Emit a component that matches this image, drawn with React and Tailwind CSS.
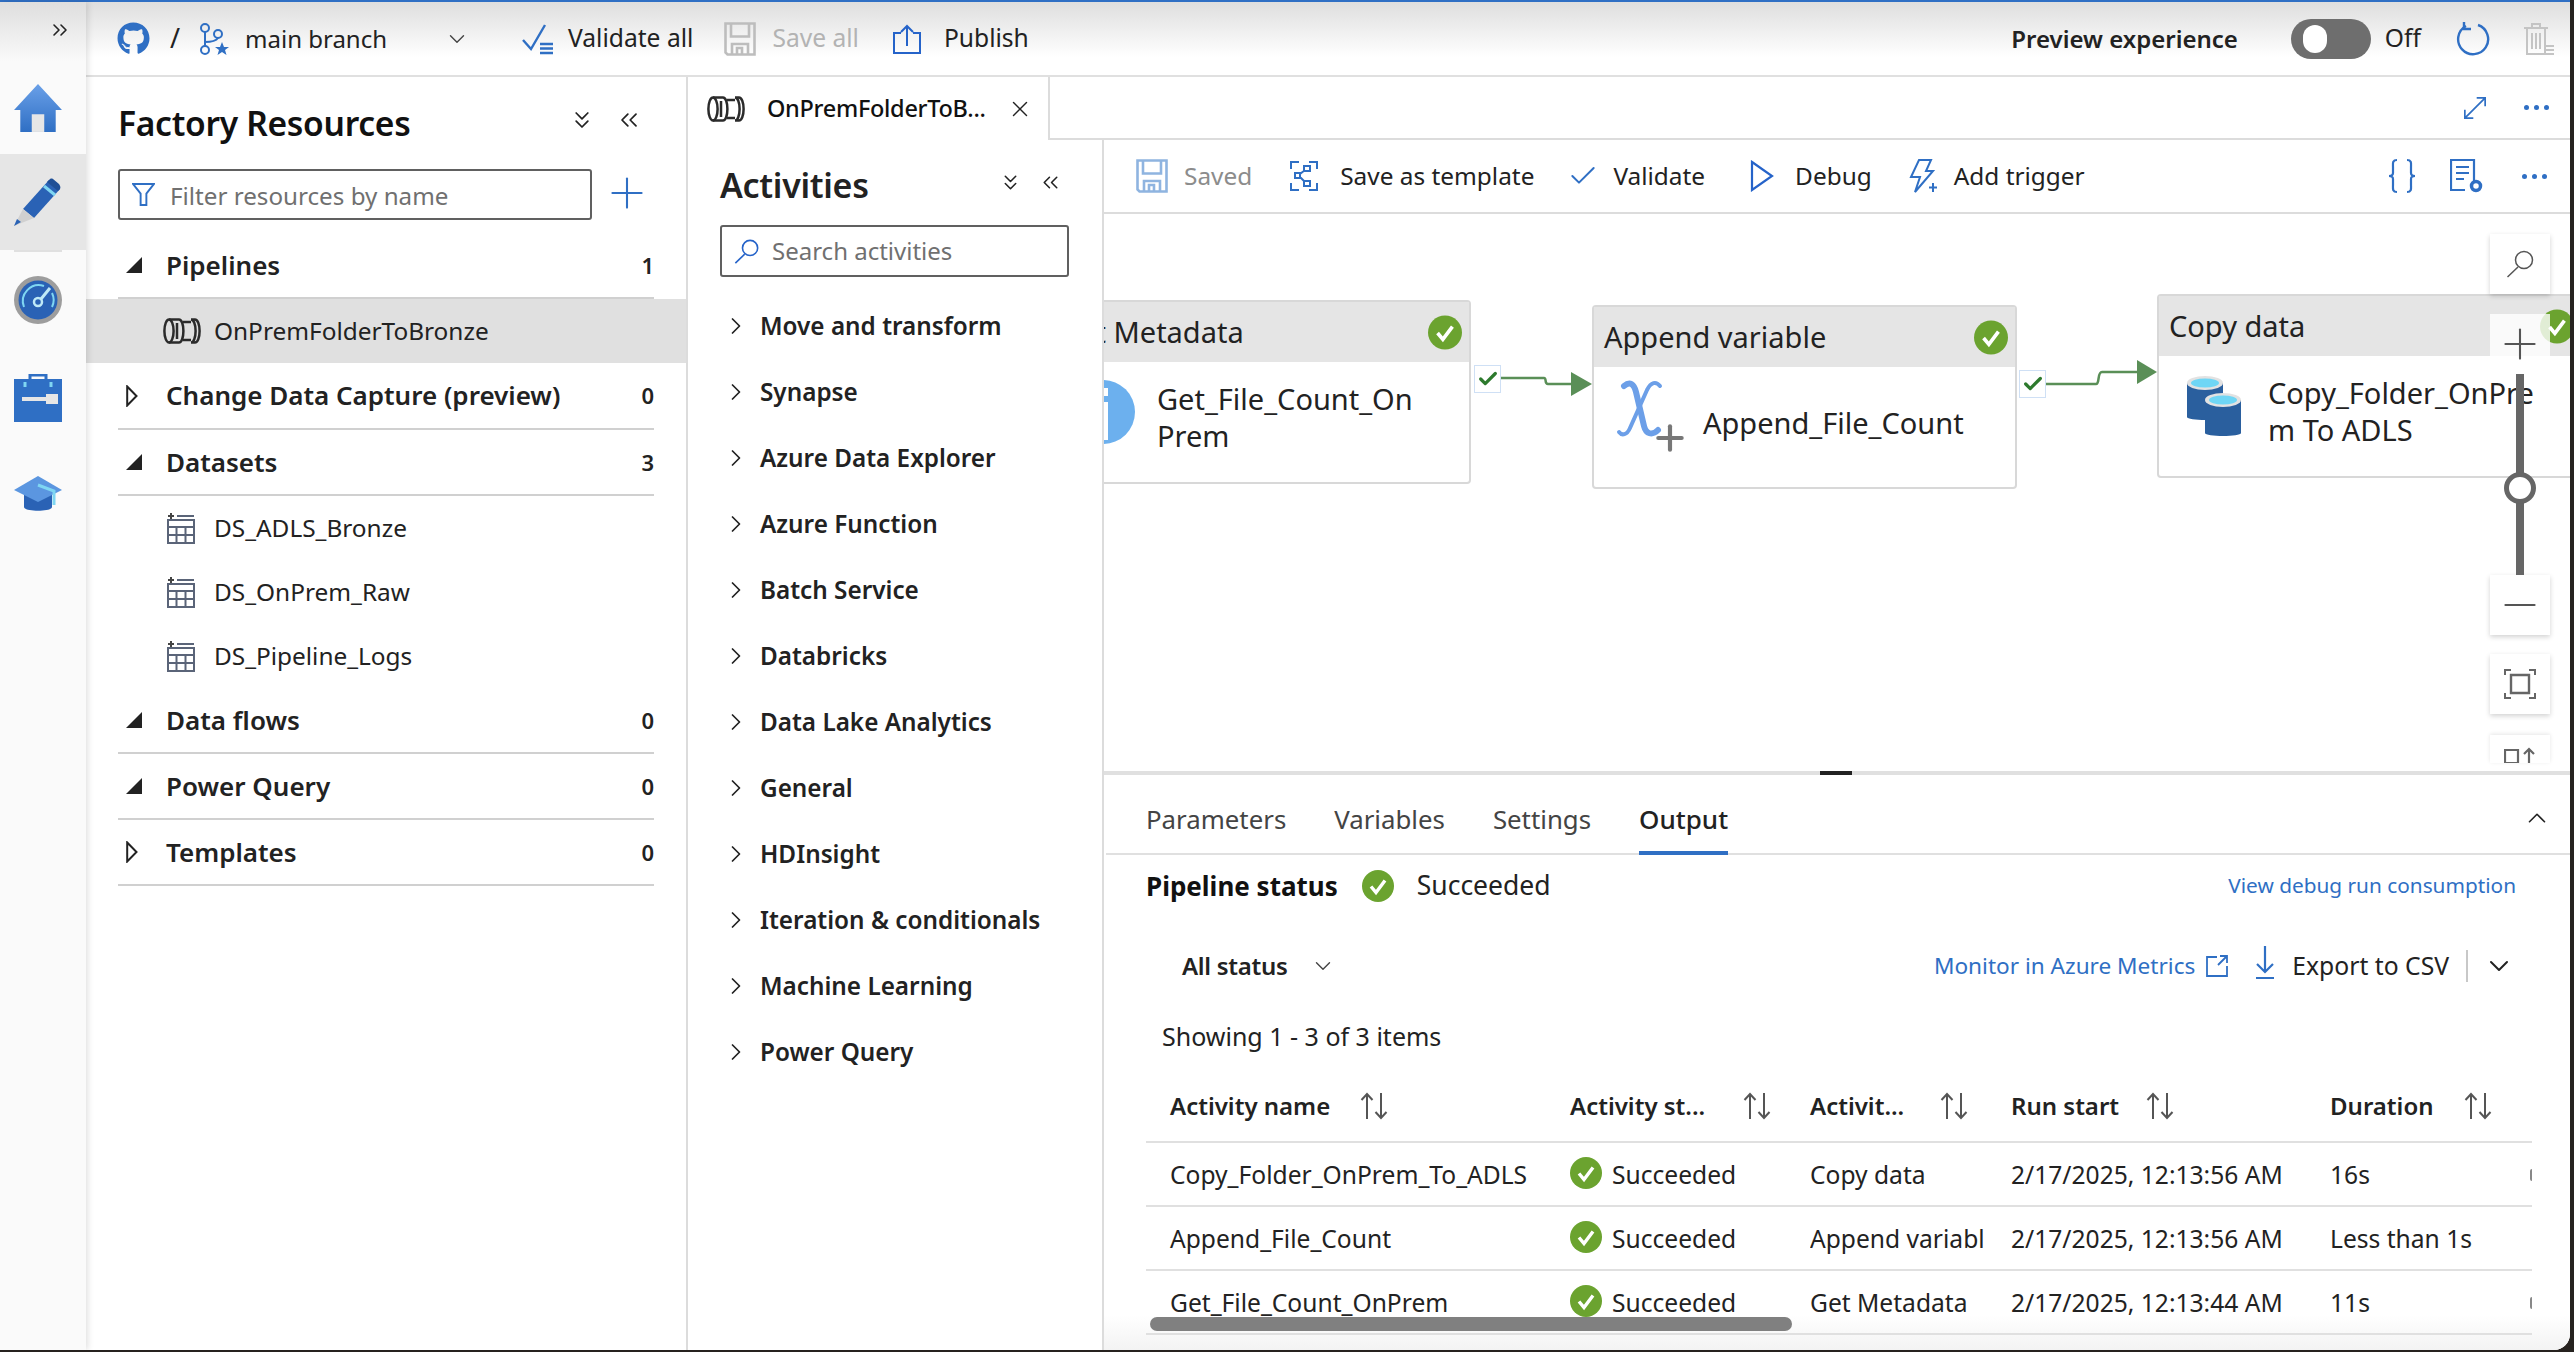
import React from "react";
import { FaGithub } from "react-icons/fa";
import {
  ChevronDown,
  ChevronRight,
  ChevronUp,
  ChevronsDown,
  ChevronsLeft,
  ChevronsRight,
  Plus,
  X,
  Check,
  Minus,
} from "lucide-react";

const BLUE = "#2f6fc4";

const StatusCheck = ({ className }) => (
  <svg viewBox="0 0 32 32" className={className}>
    <circle cx="16" cy="16" r="16" fill="#6ba32f" />
    <path d="M9 16.5l5 6 9-12" fill="none" stroke="#fff" strokeWidth="3.4" />
  </svg>
);

const Lens = ({ color, width, className }) => (
  <svg viewBox="0 0 28 28" fill="none" stroke={color} strokeWidth={width} className={className}>
    <circle cx="18" cy="10" r="8.500" />
    <path d="M12 17L1.500 27" />
  </svg>
);

const PipelineIcon = ({ className }) => (
  <svg viewBox="0 0 38 26" fill="none" stroke="#2b2b2b" strokeWidth="2.500" className={className}>
    <ellipse cx="6" cy="13" rx="4.6" ry="11.5" />
    <path d="M6 1.5h10M6 24.5h10M16 1.5c2.6 0 4.4 5 4.4 11.5s-1.800 11.500-4.400 11.500" />
    <path d="M20 4h8M20 22h8M14 5v16" />
    <path d="M28 1.500h4c2.600 0 4.600 5 4.600 11.500s-2 11.500-4.600 11.500h-4c2.600 0 4.600-5 4.600-11.500S30.600 1.500 28 1.500z" />
  </svg>
);

const DatasetIcon = () => (
  <svg viewBox="0 0 28 32" className="w-[28px] h-[32px] shrink-0" fill="none" stroke="#5a6478" strokeWidth="2">
    <path d="M1 8h26v23H1zM1 15h26M1 23h26M9.500 15v16M18.500 15v16" />
    <path d="M10 4h17" />
    <path d="M4 1v6M1 4h6" stroke="#444" />
  </svg>
);

const SolidTri = () => (
  <svg viewBox="0 0 16 16" className="w-[16px] h-[16px]">
    <path d="M16 0v16H0z" fill="#222" />
  </svg>
);

const OpenTri = () => (
  <svg viewBox="0 0 12 22" className="w-[12px] h-[22px]">
    <path d="M1.200 1.500L10.500 11 1.200 20.500z" fill="none" stroke="#222" strokeWidth="2" />
  </svg>
);

const SortArrows = () => (
  <svg viewBox="0 0 28 28" className="w-[28px] h-[28px] shrink-0" fill="none" stroke="#555" strokeWidth="2">
    <path d="M7 27V2M1.500 8L7 2l5.500 6M21 1v25M15.500 20l5.500 6 5.500-6" />
  </svg>
);

const SaveIcon = ({ color, className }) => (
  <svg viewBox="0 0 32 34" fill="none" stroke={color} strokeWidth="2.600" className={className}>
    <path d="M1.500 1.500h29v31h-27l-2-2z" />
    <path d="M7 1.500v13h18v-13M8 32.500V22h16v10.500M13 32v-6h5v6" />
  </svg>
);

const Dots = ({ className }) => (
  <div className={`flex gap-[5px] ${className}`}>
    <span className="w-[5px] h-[5px] rounded-full bg-[#2f6fc4]" />
    <span className="w-[5px] h-[5px] rounded-full bg-[#2f6fc4]" />
    <span className="w-[5px] h-[5px] rounded-full bg-[#2f6fc4]" />
  </div>
);

const Rail = () => (
  <div className="w-[86px] shrink-0 flex flex-col items-center bg-[linear-gradient(180deg,#dedede_0,#fafafa_60px)] shadow-[2px_0_6px_rgba(0,0,0,0.12)] z-10">
    <div className="h-[75px] w-full flex justify-end pr-[14px] pt-[16px]">
      <ChevronsRight size={24} strokeWidth={1.6} color="#222" />
    </div>
    <div className="h-[77px] flex items-center pb-[16px] -ml-[10px]">
      <svg viewBox="0 0 48 48" className="w-[50px] h-[50px]">
        <defs>
          <linearGradient id="homeFill" x1="0" y1="0" x2="0" y2="1">
            <stop offset="0" stopColor="#6aa0e8" />
            <stop offset="1" stopColor="#2f6fc4" />
          </linearGradient>
        </defs>
        <path d="M24 1L1 26h6v21h34V26h6z" fill="url(#homeFill)" />
        <path d="M18 30h12v17H18z" fill="#e6e6e6" />
      </svg>
    </div>
    <div className="h-[96px] w-full bg-[#e6e6e6] flex items-center justify-center pr-[10px]">
      <svg viewBox="0 0 50 50" className="w-[50px] h-[50px]">
        <path d="M10 32L36 3l11 9-26 29z" fill="#2a62b5" />
        <path d="M34 5l11 9 2-2c1-2 0-3-1-5l-6-5c-2-1-3 0-4 1z" fill="#1f4f96" />
        <path d="M31 9l11 9" stroke="#7fd6f2" strokeWidth="3" />
        <path d="M10 32l11 9-20 8z" fill="#d0d0d0" />
        <path d="M4 42l4 3-7 4z" fill="#2a62b5" />
      </svg>
    </div>
    <div className="h-[2px] w-[48px] bg-[#e0e0e0] -ml-[10px]" />
    <div className="h-[95px] flex items-center -ml-[10px]">
      <svg viewBox="0 0 48 48" className="w-[48px] h-[48px]">
        <circle cx="24" cy="24" r="24" fill="#9d9d9d" />
        <circle cx="24" cy="24" r="19.500" fill="#2a62b5" />
        <path d="M10 31a16 16 0 0 1 20-21M38 17a16 16 0 0 1 0 14" stroke="#7fd6f2" strokeWidth="2" fill="none" />
        <circle cx="24" cy="26" r="4" fill="none" stroke="#bfe9f7" strokeWidth="2.500" />
        <path d="M27 23l9-11" stroke="#bfe9f7" strokeWidth="3" />
      </svg>
    </div>
    <div className="h-[102px] flex items-center -ml-[10px]">
      <svg viewBox="0 0 48 48" className="w-[48px] h-[48px]">
        <path d="M16 5V1h16v4" fill="none" stroke="#2f6fc4" strokeWidth="3" />
        <path d="M0 5h48v43H0z" fill="#2f6fc4" />
        <path d="M11 13v-5M37 13V8" stroke="#7fd6f2" strokeWidth="3" />
        <path d="M8 25h26M34 22h8v2h-4v2h4v2h-8z" stroke="#e6e6e6" strokeWidth="4" fill="#e6e6e6" />
      </svg>
    </div>
    <div className="h-[92px] flex items-center -ml-[10px]">
      <svg viewBox="0 0 48 40" className="w-[48px] h-[40px]">
        <path d="M10 18v14c0 5 28 5 28 0V18z" fill="#2a62b5" />
        <path d="M24 1L0 15l24 12 24-12z" fill="#5b96e0" />
        <path d="M24 10l16 6v14" fill="none" stroke="#7fd6f2" strokeWidth="3" />
      </svg>
    </div>
  </div>
);

const TopBar = () => (
  <div className="h-[75px] shrink-0 flex items-center bg-[linear-gradient(180deg,#dedede_0,#ffffff_55px)] border-b-2 border-[#e0e0e0] text-[24.600px] text-[#222]">
    <FaGithub size={33} color={BLUE} className="ml-[31px]" />
    <span className="ml-[20px] text-[27px]">/</span>
    <svg viewBox="0 0 30 32" className="ml-[19px] w-[30px] h-[32px]" fill="none" stroke={BLUE} strokeWidth="2">
      <circle cx="6" cy="5" r="4" />
      <circle cx="19" cy="11" r="4" />
      <circle cx="6" cy="27" r="4" />
      <path d="M6 9v14M6 19c6 0 11-1 13-4" />
      <path d="M23 19l2 5h5l-4 3 1.500 5-4.500-3-4.500 3 1.500-5-4-3h5z" fill={BLUE} stroke="none" />
    </svg>
    <span className="ml-[16px] text-[24px]">main branch</span>
    <ChevronDown size={26} strokeWidth={1.300} color="#444" className="ml-[57px]" />
    <svg viewBox="0 0 32 32" className="ml-[52px] w-[32px] h-[32px]" fill="none" stroke={BLUE} strokeWidth="2.400">
      <path d="M1 17l8 9L23 2" />
      <path d="M18 21h13M18 25.500h13M18 30h13" />
    </svg>
    <span className="ml-[14px]">Validate all</span>
    <SaveIcon color="#bdbdbd" className="ml-[31px] w-[32px] h-[34px]" />
    <span className="ml-[16px] text-[#b3b3b3]">Save all</span>
    <svg viewBox="0 0 28 30" className="ml-[34px] w-[28px] h-[30px]" fill="none" stroke="#2563c9" strokeWidth="2">
      <path d="M8 9H1v20h26V9h-7M14 22V2M8 8l6-6 6 6" />
    </svg>
    <span className="ml-[23px]">Publish</span>
    <span className="ml-auto font-semibold text-[24px]">Preview experience</span>
    <div className="ml-[53px] w-[80px] h-[40px] rounded-full bg-[#6e6e6e] flex items-center pl-[12px]">
      <span className="w-[24px] h-[28px] rounded-full bg-white" />
    </div>
    <span className="ml-[14px]">Off</span>
    <svg viewBox="0 0 34 34" className="ml-[35px] w-[34px] h-[34px]" fill="none" stroke={BLUE} strokeWidth="2.400">
      <path d="M10 4a15 15 0 1 0 12-1" />
      <path d="M8 0v7h7" />
    </svg>
    <svg viewBox="0 0 32 34" className="ml-[33px] mr-[15px] w-[32px] h-[34px]" fill="none" stroke="#c4c4c4" strokeWidth="2">
      <path d="M1 6h24M9 6V2h8v4M4 6v26h18V6M9 11v16M13 11v16M17 11v16" />
      <path d="M22 24h9M22 28h9M22 32h9" />
    </svg>
  </div>
);

const SectionRow = ({ label, count, open, extra }) => (
  <div className={`mx-[32px] flex items-center border-b-2 border-[#d0d0d0] ${extra || "h-[66px]"}`}>
    <div className="w-[48px] pl-[8px] flex items-center">{open ? <SolidTri /> : <OpenTri />}</div>
    <span className="font-semibold text-[26px] text-[#222] flex-1">{label}</span>
    <span className="font-semibold text-[22px] text-[#222]">{count}</span>
  </div>
);

const DatasetRow = ({ name }) => (
  <div className="h-[64px] pl-[75px] flex items-center gap-[19px] text-[24.400px] text-[#222]">
    <span className="ml-[6px] flex"><DatasetIcon /></span>
    <span>{name}</span>
  </div>
);

const ResourcesPanel = () => (
  <div className="w-[602px] shrink-0 border-r-2 border-[#dcdcdc] flex flex-col bg-white">
    <div className="h-[92px] pl-[32px] flex items-center">
      <span className="font-semibold text-[33.600px] text-[#111] tracking-[-0.3px]">Factory Resources</span>
      <ChevronsDown size={28} strokeWidth={1.500} color="#222" className="ml-auto -mt-[6px]" />
      <ChevronsLeft size={28} strokeWidth={1.500} color="#222" className="ml-[19px] mr-[43px] -mt-[6px]" />
    </div>
    <div className="ml-[32px] flex items-center">
      <div className="w-[474px] h-[51px] border-2 border-[#606060] rounded-[3px] flex items-center pl-[12px]">
        <svg viewBox="0 0 24 26" className="w-[23px] h-[25px]" fill="none" stroke={BLUE} strokeWidth="2">
          <path d="M1 2h22l-8 10v12h-6V12z" />
        </svg>
        <span className="ml-[15px] pt-[3px] text-[24.200px] text-[#707070]">Filter resources by name</span>
      </div>
      <Plus size={50} strokeWidth={1} color={BLUE} className="ml-[10px] -mt-[4px]" />
    </div>
    <div className="h-[13px]" />
    <SectionRow label="Pipelines" count="1" open />
    <div className="h-[64px] bg-[#e0e0e0] pl-[77px] flex items-center gap-[13px] text-[24.400px] text-[#222]">
      <PipelineIcon className="w-[38px] h-[26px]" />
      <span>OnPremFolderToBronze</span>
    </div>
    <SectionRow label="Change Data Capture (preview)" count="0" extra="h-[67px]" />
    <SectionRow label="Datasets" count="3" open />
    <DatasetRow name="DS_ADLS_Bronze" />
    <DatasetRow name="DS_OnPrem_Raw" />
    <DatasetRow name="DS_Pipeline_Logs" />
    <SectionRow label="Data flows" count="0" open />
    <SectionRow label="Power Query" count="0" open />
    <SectionRow label="Templates" count="0" />
  </div>
);

const categories = [
  "Move and transform",
  "Synapse",
  "Azure Data Explorer",
  "Azure Function",
  "Batch Service",
  "Databricks",
  "Data Lake Analytics",
  "General",
  "HDInsight",
  "Iteration & conditionals",
  "Machine Learning",
  "Power Query",
];

const ActivitiesPanel = () => (
  <div className="w-[416px] shrink-0 border-r-2 border-[#dcdcdc] flex flex-col pl-[32px] bg-white z-10">
    <div className="h-[85px] pt-[24px] flex items-start">
      <span className="font-semibold text-[34px] leading-[42px] text-[#222] tracking-[-0.3px]">Activities</span>
      <ChevronsDown size={25} strokeWidth={1.500} color="#222" className="ml-auto mt-[6px]" />
      <ChevronsLeft size={25} strokeWidth={1.500} color="#222" className="ml-[15px] mr-[39px] mt-[6px]" />
    </div>
    <div className="w-[349px] h-[52px] border-2 border-[#606060] rounded-[3px] flex items-center pl-[12px]">
      <Lens color="#2563c9" width="1.800" className="w-[25px] h-[25px]" />
      <span className="ml-[13px] text-[24px] text-[#707070]">Search activities</span>
    </div>
    <div className="h-[16px]" />
    {categories.map((c) => (
      <div key={c} className="h-[66px] flex items-center">
        <ChevronRight size={28} strokeWidth={1.500} color="#222" className="ml-[2px]" />
        <span className="ml-[10px] font-semibold text-[24.300px] text-[#222]">{c}</span>
      </div>
    ))}
  </div>
);

const EditorToolbar = () => (
  <div className="h-[74px] shrink-0 border-b-2 border-[#dcdcdc] flex items-center text-[24.400px] text-[#222]">
    <SaveIcon color="#8fb4e0" className="ml-[32px] w-[32px] h-[34px]" />
    <span className="ml-[16px] text-[#8c8c8c]">Saved</span>
    <svg viewBox="0 0 28 30" className="ml-[38px] w-[28px] h-[30px]" fill="none" stroke={BLUE} strokeWidth="2">
      <path d="M1 8V1h8M19 1h8v7M1 22v7h8M19 29h8v-7" />
      <path d="M14 5h6v5h-6zM14 20h6v5h-6zM5 12h5v5H5zM10 13l5-4M10 16l5 5" />
    </svg>
    <span className="ml-[22px]">Save as template</span>
    <Check size={32} strokeWidth={1.500} color={BLUE} className="ml-[33px]" />
    <span className="ml-[14px]">Validate</span>
    <svg viewBox="0 0 24 32" className="ml-[45px] w-[24px] h-[32px]" fill="none" stroke="#2563c9" strokeWidth="2.200">
      <path d="M2 2l20 14L2 30z" />
    </svg>
    <span className="ml-[21px]">Debug</span>
    <svg viewBox="0 0 30 34" className="ml-[37px] w-[30px] h-[34px]" fill="none" stroke={BLUE} strokeWidth="2">
      <path d="M10 1h12l-5 11h7L6 33l5-15H2z" />
      <path d="M24 24v9M20 28.500h8" />
    </svg>
    <span className="ml-[15px]">Add trigger</span>
    <svg viewBox="0 0 30 36" className="ml-auto w-[30px] h-[36px]" fill="none" stroke={BLUE} strokeWidth="2.200">
      <path d="M10 2C5 2 6 6 6 9v6c0 2-2 3-4 3 2 0 4 1 4 3v6c0 3-1 7 4 7M20 2c5 0 4 4 4 7v6c0 2 2 3 4 3-2 0-4 1-4 3v6c0 3 1 7-4 7" />
    </svg>
    <svg viewBox="0 0 34 34" className="ml-[33px] w-[34px] h-[34px]" fill="none" stroke={BLUE} strokeWidth="2.200">
      <path d="M24 22V1H1v30h14M6 8h13M6 14h13M6 20h8" />
      <circle cx="26" cy="27" r="4.500" strokeWidth="3.500" />
    </svg>
    <Dots className="ml-[38px] mr-[23px]" />
  </div>
);

const Node = ({ title, position, children, check }) => (
  <div className={`absolute w-[425px] h-[184px] rounded-[4px] border-2 border-[#d8d8d8] bg-white ${position}`}>
    <div className="h-[60px] bg-[#e5e5e5] flex items-center pl-[10px] text-[29px] text-[#222] whitespace-nowrap">{title}</div>
    {check}
    {children}
  </div>
);

const NodeBody = ({ icon, lines }) => (
  <div className="h-[120px] flex items-start">
    <div className="w-[109px] h-[100px] flex items-center justify-center shrink-0">{icon}</div>
    <div className="pt-[10px] text-[29px] leading-[37px] text-[#222] min-h-[100px] flex flex-col justify-center">
      {lines.map((l) => (
        <span key={l} className="whitespace-pre">{l}</span>
      ))}
    </div>
  </div>
);

const ZoomBtn = ({ className, children }) => (
  <div className={`w-[60px] h-[60px] flex items-center justify-center shadow-[0_2px_5px_rgba(0,0,0,0.18)] ${className}`}>
    {children}
  </div>
);

const Canvas = () => (
  <div className="relative h-[557px] shrink-0 overflow-hidden bg-white">
    <Node
      title="Get Metadata"
      position="left-[-58px] top-[86px]"
      check={<StatusCheck className="absolute left-[380px] top-[13px] w-[34px] h-[35px]" />}
    >
      <NodeBody
        lines={["Get_File_Count_On", "Prem"]}
        icon={
          <svg viewBox="0 0 64 64" className="w-[64px] h-[64px]">
            <circle cx="32" cy="32" r="32" fill="#6cb0ee" />
            <path d="M28 22h9v38h-9zM28 8h9v8h-9z" fill="#fff" />
          </svg>
        }
      />
    </Node>
    <Node
      title="Append variable"
      position="left-[488px] top-[91px]"
      check={<StatusCheck className="absolute left-[380px] top-[13px] w-[34px] h-[35px]" />}
    >
      <NodeBody
        lines={["Append_File_Count"]}
        icon={
          <div className="relative w-[70px] h-[70px]">
            <svg viewBox="0 0 48 64" className="absolute left-[2px] top-[-4px] w-[48px] h-[64px]" fill="none" stroke="#6c9fe8" strokeLinecap="round">
              <path d="M8 8C14 3 18 6 20 14l8 34c2 8 8 10 14 4" strokeWidth="6" />
              <path d="M44 8c-4-5-9-4-13 4L14 50c-3 7-8 8-11 4" strokeWidth="4" />
            </svg>
            <Plus size={40} strokeWidth={2.500} color="#777" className="absolute left-[36px] top-[36px]" />
          </div>
        }
      />
    </Node>
    <Node
      title="Copy data"
      position="left-[1053px] top-[80px]"
      check={<StatusCheck className="absolute left-[381px] top-[13px] w-[34px] h-[35px]" />}
    >
      <NodeBody
        lines={["Copy_Folder_OnPre", "m To ADLS"]}
        icon={
          <svg viewBox="0 0 54 60" className="w-[54px] h-[60px]">
            <path d="M0 7v34c0 4 36 4 36 0V7z" fill="#2a5f9e" />
            <ellipse cx="18" cy="7" rx="18" ry="7" fill="#e2e2e2" />
            <ellipse cx="18" cy="7" rx="14" ry="4.500" fill="#6fd6f5" />
            <path d="M18 24v33c0 4 36 4 36 0V24z" fill="#2a5f9e" />
            <ellipse cx="36" cy="24" rx="18" ry="7" fill="#e2e2e2" />
            <ellipse cx="36" cy="24" rx="14" ry="4.500" fill="#6fd6f5" />
          </svg>
        }
      />
    </Node>

    <svg viewBox="0 0 1466 557" className="absolute left-0 top-[1px] w-[1466px] h-[557px] pointer-events-none" fill="none">
      <path d="M397 163h43c3 0 0 6 4 6h26" stroke="#5a8f57" strokeWidth="2.500" />
      <path d="M467 157l21 12-21 12z" fill="#5a8f57" />
      <path d="M942 169h50c4 0 1-12 6-12h36" stroke="#5a8f57" strokeWidth="2.500" />
      <path d="M1033 145l20 12-20 12z" fill="#5a8f57" />
    </svg>
    <div className="absolute left-[370px] top-[151px] w-[27px] h-[28px] bg-white border border-[#cfe0f5] flex items-center justify-center">
      <Check size={22} strokeWidth={3.500} color="#2d7a2d" />
    </div>
    <div className="absolute left-[915px] top-[156px] w-[27px] h-[28px] bg-white border border-[#cfe0f5] flex items-center justify-center">
      <Check size={22} strokeWidth={3.500} color="#2d7a2d" />
    </div>

    <div className="absolute left-[1386px] top-[20px] w-[60px] flex flex-col items-center">
      <ZoomBtn className="bg-white">
        <Lens color="#555" width="1.500" className="w-[28px] h-[28px]" />
      </ZoomBtn>
      <ZoomBtn className="bg-white/80 mt-[20px] shadow-none">
        <Plus size={50} strokeWidth={1} color="#555" />
      </ZoomBtn>
      <div className="relative w-[8px] h-[201px] bg-[#666]">
        <span className="absolute left-[-12px] top-[98px] w-[32px] h-[32px] rounded-full border-[5px] border-[#666] bg-white" />
      </div>
      <ZoomBtn className="bg-white">
        <Minus size={50} strokeWidth={1} color="#555" />
      </ZoomBtn>
      <ZoomBtn className="bg-white mt-[19px]">
        <svg viewBox="0 0 32 30" className="w-[32px] h-[30px]" fill="none" stroke="#666" strokeWidth="2">
          <path d="M1 6V1h6M25 1h6v5M1 24v5h6M25 29h6v-5" />
          <path d="M7 6h18v18H7z" strokeWidth="2.400" />
        </svg>
      </ZoomBtn>
      <div className="w-[60px] h-[28px] mt-[21px] bg-white shadow-[0_-1px_4px_rgba(0,0,0,0.1)] flex justify-center pt-[12px] overflow-hidden">
        <svg viewBox="0 0 32 16" className="w-[32px] h-[16px]" fill="none" stroke="#666" strokeWidth="2.200">
          <path d="M1 3h13v13H1zM25 16V3M20 7l5-5 5 5" />
        </svg>
      </div>
    </div>
  </div>
);

const rows = [
  ["Copy_Folder_OnPrem_To_ADLS", "Copy data", "2/17/2025, 12:13:56 AM", "16s"],
  ["Append_File_Count", "Append variable", "2/17/2025, 12:13:56 AM", "Less than 1s"],
  ["Get_File_Count_OnPrem", "Get Metadata", "2/17/2025, 12:13:44 AM", "11s"],
];

const HeadCell = ({ width, label, gap }) => (
  <div className={`flex items-center shrink-0 ${width}`}>
    <span className="font-semibold text-[24px] text-[#222]">{label}</span>
    <span className={`flex ${gap}`}><SortArrows /></span>
  </div>
);

const OutputPanel = () => (
  <div className="flex-1 relative flex flex-col bg-[linear-gradient(180deg,#ffffff_0,#ffffff_94%,#f3f3f3_100%)] text-[#222]">
    <div className="h-[80px] shrink-0 border-b-2 border-[#e0e0e0] ml-[2px] pl-[40px] flex items-end text-[25.800px] text-[#444]">
      <span className="h-[53px] mr-[48px]">Parameters</span>
      <span className="h-[53px] mr-[48px]">Variables</span>
      <span className="h-[53px] mr-[48px]">Settings</span>
      <span className="h-[55px] -mb-[2px] border-b-4 border-[#2f6fc4] font-medium text-[26px] text-[#222]">Output</span>
      <ChevronUp size={30} strokeWidth={1.300} color="#222" className="ml-auto mr-[18px] mb-[20px]" />
    </div>
    <div className="h-[62px] shrink-0 pl-[42px] pr-[54px] flex items-center">
      <span className="font-bold text-[26px] text-[#111]">Pipeline status</span>
      <StatusCheck className="ml-[24px] w-[32px] h-[32px]" />
      <span className="ml-[23px] text-[26.500px]">Succeeded</span>
      <span className="ml-auto text-[20.800px] text-[#2f6fc4]">View debug run consumption</span>
    </div>
    <div className="h-[98px] shrink-0 pl-[78px] pr-[55px] flex items-center">
      <span className="font-semibold text-[24px] tracking-[-0.3px]">All status</span>
      <ChevronDown size={26} strokeWidth={1.300} color="#444" className="ml-[23px]" />
      <span className="ml-auto text-[22.600px] text-[#2f6fc4]">Monitor in Azure Metrics</span>
      <svg viewBox="0 0 22 22" className="ml-[11px] w-[22px] h-[22px]" fill="none" stroke={BLUE} strokeWidth="1.800">
        <path d="M11 2H1v19h20V11M14 1h7v7M21 1l-9 9" />
      </svg>
      <svg viewBox="0 0 20 34" className="ml-[27px] w-[20px] h-[34px] -mt-[6px]" fill="none" stroke={BLUE} strokeWidth="2">
        <path d="M10 0v26M2 18l8 8 8-8M1 32h18" strokeWidth="2.200" />
      </svg>
      <span className="ml-[17px] text-[24.700px]">Export to CSV</span>
      <span className="ml-[17px] w-[2px] h-[32px] bg-[#c8c8c8]" />
      <ChevronDown size={32} strokeWidth={1.500} color="#222" className="ml-[15px]" />
    </div>
    <div className="h-[44px] shrink-0 pl-[58px] flex items-center text-[25px]">Showing 1 - 3 of 3 items</div>
    <div className="mt-[12px] ml-[42px] w-[1386px] overflow-hidden">
      <div className="h-[72px] pl-[24px] border-b-2 border-[#e0e0e0] flex items-center">
        <HeadCell width="w-[400px]" label="Activity name" gap="ml-[30px]" />
        <HeadCell width="w-[240px]" label="Activity st..." gap="ml-[38px]" />
        <HeadCell width="w-[201px]" label="Activit..." gap="ml-[36px]" />
        <HeadCell width="w-[319px]" label="Run start" gap="ml-[27px]" />
        <HeadCell width="w-[202px]" label="Duration" gap="ml-[30px]" />
      </div>
      {rows.map((r) => (
        <div key={r[0]} className="h-[64px] pl-[24px] pt-[2px] border-b-2 border-[#e0e0e0] flex items-center text-[24.600px] text-[#222]">
          <span className="w-[400px] shrink-0 whitespace-nowrap">{r[0]}</span>
          <span className="w-[240px] shrink-0 flex items-center gap-[10px]">
            <StatusCheck className="w-[32px] h-[32px] -mt-[4px]" />
            Succeeded
          </span>
          <span className="w-[201px] shrink-0">
            <span className="block w-[175px] overflow-hidden whitespace-nowrap">{r[1]}</span>
          </span>
          <span className="w-[319px] shrink-0 whitespace-nowrap">{r[2]}</span>
          <span className="w-[200px] shrink-0 whitespace-nowrap">{r[3]}</span>
          {r[3] !== "Less than 1s" && <span className="w-[2px] h-[12px] rounded-l-full bg-[#888]" />}
        </div>
      ))}
    </div>
    <div className="absolute left-[46px] top-[542px] w-[642px] h-[14px] rounded-full bg-[#808080]" />
  </div>
);

export default function App() {
  return (
    <div className="w-full h-[1352px] bg-[#26221f] overflow-hidden font-['Noto_Sans','Open_Sans',sans-serif]">
      <div className="w-[2570px] h-[1350px] bg-white rounded-br-[16px] overflow-hidden flex flex-col">
        <div className="h-[2px] shrink-0 bg-[#2f6fc4]" />
        <div className="flex-1 flex min-h-0">
          <Rail />
          <div className="flex-1 flex flex-col min-w-0">
            <TopBar />
            <div className="flex-1 flex min-h-0">
              <ResourcesPanel />
              <div className="flex-1 flex flex-col min-w-0">
                <div className="h-[63px] shrink-0 flex">
                  <div className="w-[360px] flex items-center pl-[19px] bg-white">
                    <PipelineIcon className="w-[38px] h-[26px]" />
                    <span className="ml-[22px] font-medium text-[23.500px] text-[#111] tracking-[-0.3px]">OnPremFolderToB...</span>
                    <X size={26} strokeWidth={1.300} color="#222" className="ml-auto mr-[15px]" />
                  </div>
                  <div className="flex-1 border-l-2 border-b-2 border-[#dcdcdc] flex items-center justify-end pr-[21px]">
                    <svg viewBox="0 0 26 26" className="w-[22px] h-[22px]" fill="none" stroke={BLUE} strokeWidth="2">
                      <path d="M1 25L25 1M15 1h10v10M1 15v10h10" />
                    </svg>
                    <Dots className="ml-[38px]" />
                  </div>
                </div>
                <div className="flex-1 flex min-h-0">
                  <ActivitiesPanel />
                  <div className="flex-1 flex flex-col min-w-0">
                    <EditorToolbar />
                    <Canvas />
                    <div className="h-[4px] shrink-0 bg-[#e0e0e0] flex justify-center">
                      <div className="w-[32px] h-[4px] bg-[#222] ml-[-2px]" />
                    </div>
                    <OutputPanel />
                  </div>
                </div>
              </div>
            </div>
          </div>
        </div>
      </div>
    </div>
  );
}
